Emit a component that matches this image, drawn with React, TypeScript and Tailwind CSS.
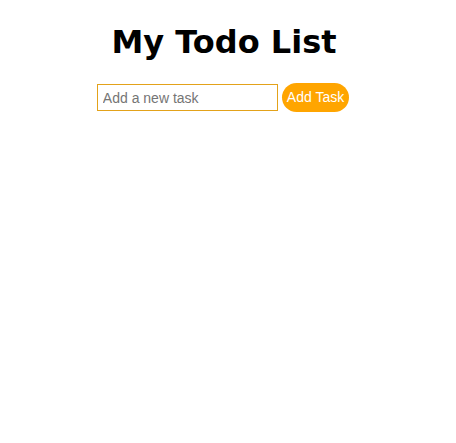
import { useState } from 'react'

export default function App() {
  const [tasks, setTasks] = useState<string[]>([])
  const [text, setText] = useState('')

  const addTask = () => {
    if (!text.trim()) return
    setTasks([...tasks, text.trim()])
    setText('')
  }

  return (
    <div className="flex flex-col items-center pr-[8px] font-['Liberation_Sans',Arial,sans-serif]">
      <h1 className="mt-[21px] text-[32px] leading-[42px] font-bold text-black font-['DejaVu_Sans',Verdana,sans-serif]">
        My Todo List
      </h1>
      <div className="mt-[20px] mr-[2px] flex items-center gap-[4px]">
        <input
          value={text}
          onChange={e => setText(e.target.value)}
          placeholder="Add a new task"
          className="w-[181px] h-[27px] border border-[#e3a21a] px-[5px] text-[14px] text-black placeholder:text-[#757575] outline-none"
        />
        <button
          type="button"
          onClick={addTask}
          className="h-[29px] px-[5px] rounded-full bg-[#ffa500] text-white text-[14px]"
        >
          Add Task
        </button>
      </div>
      <ul>
        {tasks.map((t, i) => (
          <li key={i}>{t}</li>
        ))}
      </ul>
    </div>
  )
}
